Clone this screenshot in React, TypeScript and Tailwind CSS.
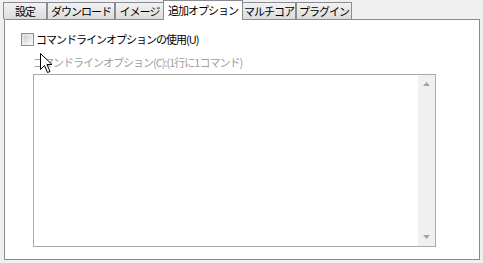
import React from "react";

const FONT = { fontFamily: '"Noto Sans CJK JP", "Noto Sans", sans-serif' };

const TABS = [
  { label: "設定", w: 44 },
  { label: "ダウンロード", w: 68 },
  { label: "イメージ", w: 49 },
  { label: "追加オプション", w: 80, active: true },
  { label: "マルチコア", w: 54 },
  { label: "プラグイン", w: 56 },
];

function Cursor() {
  return (
    <svg width="13" height="21" viewBox="0 0 13 21" className="absolute left-[40px] top-[53px]">
      <path
        d="M0.5 0.5 L0.5 16.5 L4.5 12.5 L7.5 19.5 L10 18.5 L7 11.5 L12 11.5 Z"
        fill="#fff"
        stroke="#000"
        strokeWidth="1"
        strokeLinejoin="miter"
      />
    </svg>
  );
}

export default function App() {
  return (
    <div className="relative h-[263px] w-[483px] overflow-hidden bg-[#f0f0f0] text-[11px] text-black" style={FONT}>
      {/* タブ */}
      <div className="relative z-10 flex h-[19px] items-end pl-[3px]">
        {TABS.map((t) =>
          t.active ? (
            <div
              key={t.label}
              className="flex h-[20px] shrink-0 items-start justify-center whitespace-nowrap border border-b-0 border-[#898c95] bg-white pt-[2px] leading-[14px]"
              style={{ width: t.w, marginBottom: -1, marginLeft: -1, marginRight: -1 }}
            >
              <span className="tracking-[-1px]">{t.label}</span>
            </div>
          ) : (
            <div
              key={t.label}
              className="flex h-[17px] shrink-0 items-center justify-center whitespace-nowrap border border-b-0 border-[#898c95] bg-gradient-to-b from-[#f2f2f2] to-[#dcdcdc] leading-[14px]"
              style={{ width: t.w }}
            >
              <span className="tracking-[-1px]">{t.label}</span>
            </div>
          )
        )}
      </div>

      {/* パネル */}
      <div className="ml-[4px] mr-[3px] h-[241px] border border-[#898c95] bg-white">
        <div className="flex flex-col pl-[16px] pt-[12px]">
          <label className="flex items-center gap-[2px] leading-[14px]">
            <span className="h-[13px] w-[13px] border border-[#8e8f8f] bg-gradient-to-br from-[#dcdcdc] to-[#fafafa] p-[2px]">
              <span className="block h-full w-full bg-gradient-to-br from-[#cbcfd5] to-[#f5f6f7]" />
            </span>
            <span className="whitespace-nowrap tracking-[-1px]">コマンドラインオプションの使用(U)</span>
          </label>
          <span className="mt-[9px] whitespace-nowrap pl-[12px] leading-[14px] tracking-[-1px] text-[#a0a0a0]">
            コマンドラインオプション(C):(1行に1コマンド)
          </span>
          <div className="ml-[12px] mt-[5px] flex h-[173px] w-[403px] border border-[#a9a9a9] bg-white">
            <div className="flex-1" />
            <div className="flex w-[17px] flex-col items-center justify-between bg-[#f0f0f0] py-[7px]">
              <svg width="7" height="4" viewBox="0 0 7 4">
                <path d="M3.5 0 L7 4 L0 4 Z" fill="#a3a3a3" />
              </svg>
              <svg width="7" height="4" viewBox="0 0 7 4">
                <path d="M0 0 L7 0 L3.5 4 Z" fill="#a3a3a3" />
              </svg>
            </div>
          </div>
        </div>
      </div>

      <Cursor />
    </div>
  );
}
